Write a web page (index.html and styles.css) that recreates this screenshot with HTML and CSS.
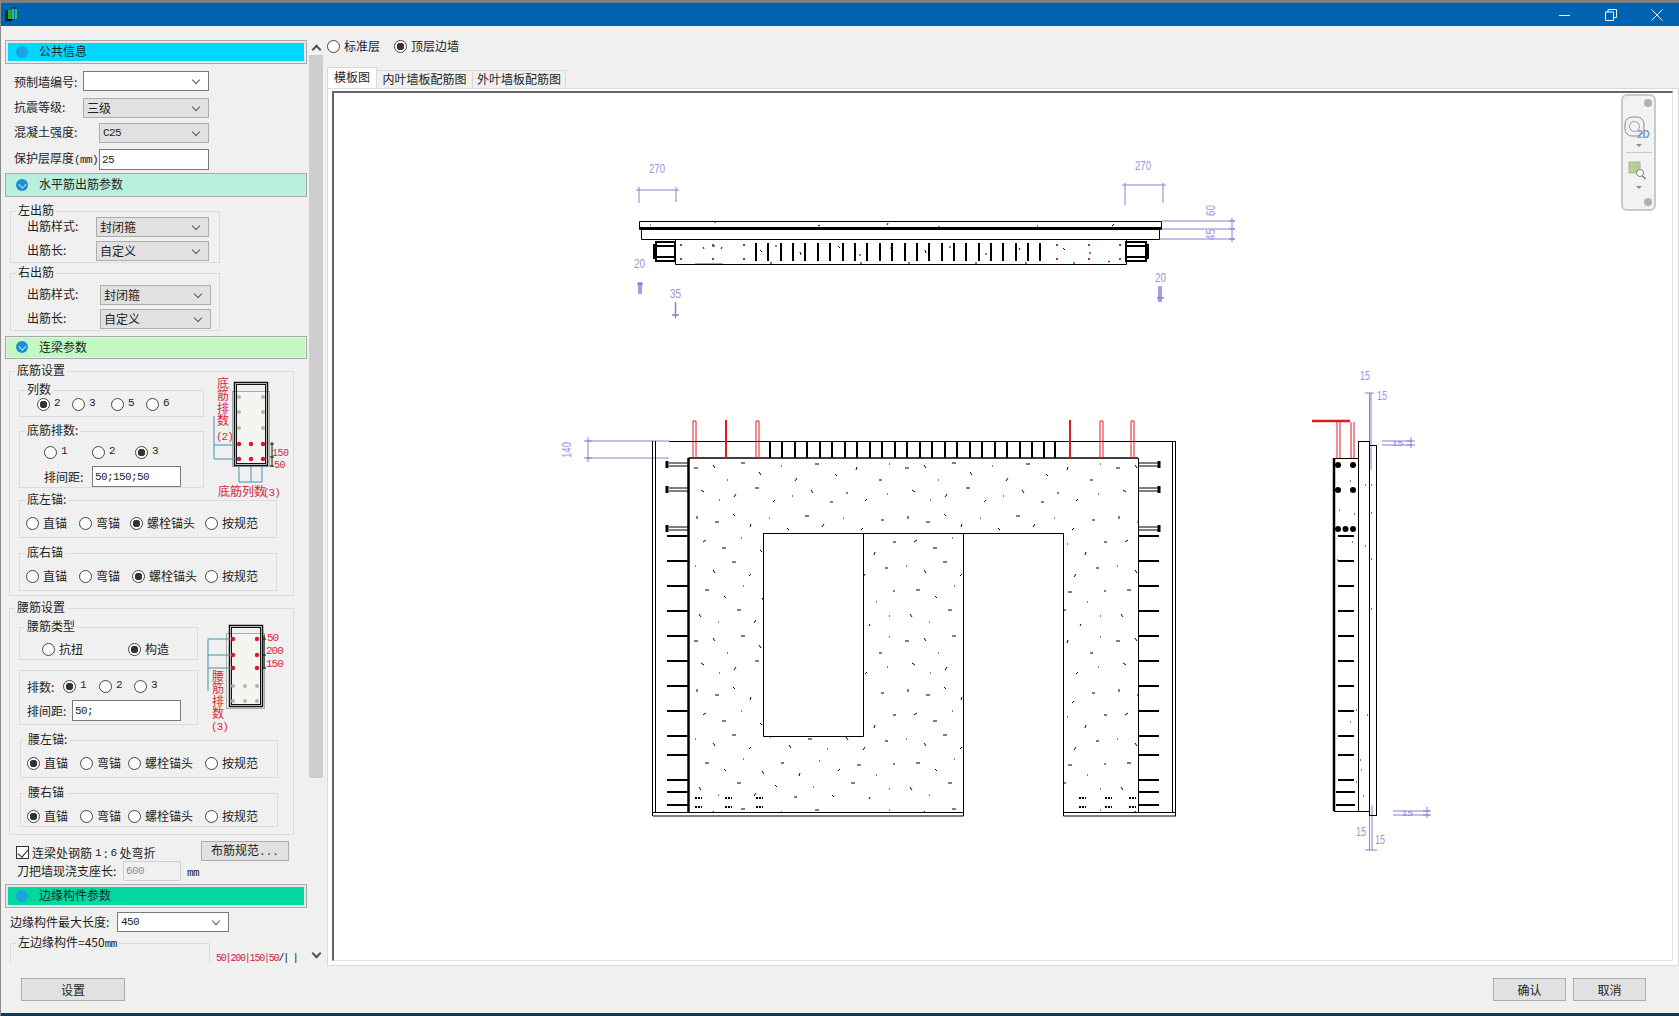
FILE: index.html
```html
<!DOCTYPE html>
<html lang="zh-CN">
<head>
<meta charset="utf-8">
<title>预制墙参数</title>
<link rel="stylesheet" href="styles.css">
</head>
<body>
<div class="window">
  <header class="titlebar">
    <svg class="appicon" width="12" height="15" viewBox="0 0 12 15"><path d="M0 4 3 2v12l-3 1z" fill="#0a2a1a"/><path d="M3 3h3.500v9H3z" fill="#1ea84a"/><path d="M7 2h2v10H7zM10 2h2v10h-2z" fill="#33c35f"/><path d="M3 12h5l-2 2H3z" fill="#04140c"/><path d="M6 1h2M9.500 1h2" stroke="#111"/></svg>
    <div class="winbtns">
      <svg width="12" height="12" viewBox="0 0 12 12"><path d="M0 6.500h11" stroke="#fff"/></svg>
      <svg width="12" height="12" viewBox="0 0 12 12"><path d="M.5 3h8v8.500h-8zM3 3V.5h8.500v8H8.500" fill="none" stroke="#fff"/></svg>
      <svg width="12" height="12" viewBox="0 0 12 12"><path d="M.5.5l11 11M11.500.5l-11 11" stroke="#fff"/></svg>
    </div>
  </header>

  <div class="content">
    <aside class="side">
      <div class="sidepanel">
        <h2 class="sec sec-a"><span class="secdot faint"></span>公共信息</h2>
        <div class="row r-top mt7"><span class="lab l69 low">预制墙编号:</span><div class="combo white w126"><span></span></div></div>
        <div class="row r-top mt7"><span class="lab l69">抗震等级:</span><div class="combo w126"><span>三级</span></div></div>
        <div class="row r-top mt5"><span class="lab l85">混凝土强度:</span><div class="combo w110"><span class="asc">C25</span></div></div>
        <div class="row r-top mt6 h21"><span class="lab l85">保护层厚度<span class="asc">(mm)</span></span><input class="txt w110 asc" value="25"></div>

        <h2 class="sec sec-b mt3"><span class="secdot"></span>水平筋出筋参数</h2>
        <fieldset class="g g-out mt8">
          <legend>左出筋</legend>
          <div class="row pl16"><span class="lab l69">出筋样式:</span><div class="combo w113"><span>封闭箍</span></div></div>
          <div class="row pl16 mt4"><span class="lab l69">出筋长:</span><div class="combo w113"><span>自定义</span></div></div>
        </fieldset>
        <fieldset class="g g-out mt4">
          <legend>右出筋</legend>
          <div class="row pl16 mt6"><span class="lab l73">出筋样式:</span><div class="combo w111"><span>封闭箍</span></div></div>
          <div class="row pl16 mt4"><span class="lab l73">出筋长:</span><div class="combo w111"><span>自定义</span></div></div>
        </fieldset>

        <h2 class="sec sec-c mt5"><span class="secdot"></span>连梁参数</h2>

        <fieldset class="g g-main mt6 pb4">
          <legend>底筋设置</legend>
          <fieldset class="g g-sub w185 mt7 pb5">
            <legend>列数</legend>
            <div class="radios c-cols pl17 mt2">
              <label class="rad"><input type="radio" name="a1" checked><span class="asc">2</span></label>
              <label class="rad"><input type="radio" name="a1"><span class="asc">3</span></label>
              <label class="rad"><input type="radio" name="a1"><span class="asc">5</span></label>
              <label class="rad"><input type="radio" name="a1"><span class="asc">6</span></label>
            </div>
          </fieldset>
          <fieldset class="g g-sub w185 mt8">
            <legend>底筋排数:</legend>
            <div class="radios c-rows pl24 mt9">
              <label class="rad"><input type="radio" name="a2"><span class="asc">1</span></label>
              <label class="rad"><input type="radio" name="a2"><span class="asc">2</span></label>
              <label class="rad"><input type="radio" name="a2" checked><span class="asc">3</span></label>
            </div>
            <div class="row pl24 mt7 h21"><span class="lab l48">排间距:</span><input class="txt w89 asc" value="50;150;50"></div>
          </fieldset>
          <fieldset class="g g-sub w258 mt6 pb7">
            <legend>底左锚:</legend>
            <div class="radios c-anc1 pl6 mt11">
              <label class="rad"><input type="radio" name="a3">直锚</label>
              <label class="rad"><input type="radio" name="a3">弯锚</label>
              <label class="rad"><input type="radio" name="a3" checked>螺栓锚头</label>
              <label class="rad"><input type="radio" name="a3">按规范</label>
            </div>
          </fieldset>
          <fieldset class="g g-sub w258 mt9 pb7">
            <legend>底右锚</legend>
            <div class="radios c-anc2 pl6 mt11">
              <label class="rad"><input type="radio" name="a4">直锚</label>
              <label class="rad"><input type="radio" name="a4">弯锚</label>
              <label class="rad"><input type="radio" name="a4" checked>螺栓锚头</label>
              <label class="rad"><input type="radio" name="a4">按规范</label>
            </div>
          </fieldset>
          <svg class="diagram d1" width="76" height="122" viewBox="215 379 76 122">
            <rect x="233.500" y="392.500" width="37" height="75" fill="#f3f5f1" stroke="#a9a9a9"/>
            <rect x="235.500" y="383.500" width="33" height="83" fill="none" stroke="#111" stroke-width="1.500"/>
            <rect x="237.500" y="385.500" width="29" height="79" fill="none" stroke="#111"/>
            <path d="M215 417v43M215 446h22M215 460h22M240 467v16M252 467v16M263 467v16M240 483h23" fill="none" stroke="#3f93ad"/>
            <g fill="#b5b5ac"><circle cx="240" cy="398" r="2"/><circle cx="264" cy="398" r="2"/><circle cx="240" cy="413" r="2"/><circle cx="264" cy="413" r="2"/><circle cx="240" cy="429" r="2"/><circle cx="264" cy="429" r="2"/></g>
            <g fill="#e0152f"><circle cx="240" cy="445" r="2.200"/><circle cx="252" cy="445" r="2.200"/><circle cx="264" cy="445" r="2.200"/><circle cx="240" cy="460" r="2.200"/><circle cx="252" cy="460" r="2.200"/><circle cx="264" cy="460" r="2.200"/></g>
            <path d="M273 443v25M271 445h4M271 458h4M271 467h4" fill="none" stroke="#111"/>
            <g class="redtxt"><text class="vert" x="224" y="378">底筋排数</text><text class="m" x="217" y="441">(2)</text><text class="m s" x="273" y="457">150</text><text class="m s" x="275" y="469">50</text><text x="219" y="497">底筋列数</text><text class="m" x="264" y="497">(3)</text></g>
          </svg>
        </fieldset>

        <fieldset class="g g-main mt6 pb7">
          <legend>腰筋设置</legend>
          <fieldset class="g g-sub w179 mt7 pb3">
            <legend>腰筋类型</legend>
            <div class="radios c-type pl22 mt10">
              <label class="rad"><input type="radio" name="b1">抗扭</label>
              <label class="rad"><input type="radio" name="b1" checked>构造</label>
            </div>
          </fieldset>
          <div class="plain w179">
            <div class="row row13 pl7">
              <span class="lab l36">排数:</span>
              <div class="radios c-pai">
                <label class="rad"><input type="radio" name="b2" checked><span class="asc">1</span></label>
                <label class="rad"><input type="radio" name="b2"><span class="asc">2</span></label>
                <label class="rad"><input type="radio" name="b2"><span class="asc">3</span></label>
              </div>
            </div>
            <div class="row pl7 mt7 h21"><span class="lab l45">排间距:</span><input class="txt w109 asc" value="50;"></div>
          </div>
          <fieldset class="g g-sub w258 mt9 ml10 pb7">
            <legend>腰左锚:</legend>
            <div class="radios c-anc3 pl6 mt11">
              <label class="rad"><input type="radio" name="b3" checked>直锚</label>
              <label class="rad"><input type="radio" name="b3">弯锚</label>
              <label class="rad"><input type="radio" name="b3">螺栓锚头</label>
              <label class="rad"><input type="radio" name="b3">按规范</label>
            </div>
          </fieldset>
          <fieldset class="g g-sub w258 mt9 ml10 pb3">
            <legend>腰右锚</legend>
            <div class="radios c-anc3 pl6 mt11">
              <label class="rad"><input type="radio" name="b4" checked>直锚</label>
              <label class="rad"><input type="radio" name="b4">弯锚</label>
              <label class="rad"><input type="radio" name="b4">螺栓锚头</label>
              <label class="rad"><input type="radio" name="b4">按规范</label>
            </div>
          </fieldset>
          <svg class="diagram d2" width="76" height="112" viewBox="208 622 76 112">
            <rect x="228.500" y="634.500" width="38" height="75" fill="#f3f5f1" stroke="#a9a9a9"/>
            <rect x="231.500" y="626.500" width="33" height="81" fill="none" stroke="#111" stroke-width="1.500"/>
            <rect x="233.500" y="628.500" width="29" height="77" fill="none" stroke="#111"/>
            <path d="M210 640v52M210 640h22M210 656h22M210 669h22" fill="none" stroke="#3f93ad"/>
            <g fill="#e0152f"><circle cx="235" cy="640" r="2.200"/><circle cx="259" cy="640" r="2.200"/><circle cx="235" cy="656" r="2.200"/><circle cx="259" cy="656" r="2.200"/><circle cx="235" cy="669" r="2.200"/><circle cx="259" cy="669" r="2.200"/></g>
            <g fill="#b5b5ac"><circle cx="235" cy="687" r="2"/><circle cx="247" cy="687" r="2"/><circle cx="259" cy="687" r="2"/><circle cx="235" cy="702" r="2"/><circle cx="247" cy="702" r="2"/><circle cx="259" cy="702" r="2"/></g>
            <path d="M266 636v34M264 640h4M264 656h4M264 669h4" fill="none" stroke="#111"/>
            <g class="redtxt"><text class="m" x="269" y="642">50</text><text class="m" x="268" y="655">200</text><text class="m" x="268" y="668">150</text><text class="vert" x="220" y="671">腰筋排数</text><text class="m" x="213" y="731">(3)</text></g>
          </svg>
        </fieldset>

        <div class="row rowchk mt6">
          <label class="chk"><input type="checkbox" checked>连梁处钢筋<span class="asc">1</span>: <span class="asc">6</span>处弯折</label>
          <button class="btn btn-rule" type="button">布筋规范<span class="dots asc">...</span></button>
        </div>
        <div class="row rowknife"><span class="lab l106">刀把墙现浇支座长:</span><input class="txt dis w58 asc" value="600" disabled><span class="asc unit">mm</span></div>

        <h2 class="sec sec-d mt3"><span class="secdot faint"></span>边缘构件参数</h2>
        <div class="row rowmax mt4"><span class="lab l107">边缘构件最大长度:</span><div class="combo white w112"><span class="asc">450</span></div></div>
        <div class="edge mt5">
          <fieldset class="g g-edge"><legend>左边缘构件=450<span class="asc">mm</span></legend></fieldset>
          <span class="edgeval">50|200|150|50<span class="edgebar">/| |</span></span>
        </div>
      </div>
      <div class="scroll">
        <span class="chev up"></span>
        <span class="thumb"></span>
        <span class="chev down"></span>
      </div>
    </aside>

    <main class="right">
      <div class="toprad">
        <label class="rad"><input type="radio" name="t" >标准层</label>
        <label class="rad"><input type="radio" name="t" checked>顶层边墙</label>
      </div>
      <nav class="tabs">
        <span class="tab on">模板图</span>
        <span class="tab t2">内叶墙板配筋图</span>
        <span class="tab">外叶墙板配筋图</span>
      </nav>
      <section class="page">
        <div class="canvas">
          <svg class="drawing" width="1339" height="867" viewBox="334 93 1339 867">
            <defs>
              <pattern id="spk1" patternUnits="userSpaceOnUse" x="689" y="458" width="211" height="173">
                <path d="M5 10h4M24 7l2 3M38 22h1M52 5h4M70 14l2 3M92 8h1M108 20l-2 3M126 6h4M146 16l2 2M168 9l-1 3M190 22h3M200 6h1M12 32l3 2M30 42h1M47 36l-2 3M66 30h4M84 44l2-2M103 38h1M122 32l2 3M141 44h3M158 34v2M178 41l-2 2M198 36h1M8 58v3M26 64h4M44 56l2 2M62 66l-1 3M80 60h1M98 70l2 2M116 58h4M135 66l-2 3M154 60h1M172 72l2-2M192 62h3M14 84l3-2M33 90h4M52 80h1M71 92l2 2M90 84l-2 3M109 92h1M128 82h4M148 90l2 3M167 86h1M186 94l-1 3M204 84h3M6 108h1M24 112l2 3M43 104h4M62 116l-2 2M81 106h1M100 114l2 3M119 108h4M138 118h1M157 106l2 3M176 116l-2 3M196 110h3M16 132h4M35 138l2 2M54 128h1M73 140l2 3M92 132h3M111 142l-1 3M130 130h1M149 140l2-2M168 134h4M187 144h1M205 132v2M10 156l2 3M29 164h1M48 152h4M67 162l-2 3M86 154l2 2M105 166h3M124 156h1M143 164l2 2M162 152h4M181 166l-1 2M200 158h1" fill="none" stroke="#000"/>
              </pattern>
            </defs>

            <g class="dim">
              <path d="M639 187v16M676 187v15M636 190h43M1125 183v22M1163 183v20M1122 185h44M1162 221h73M1162 229h73M1160 239h75M1232 218v24M1229 221h6M1229 229h6M1229 239h6"/>
              <path d="M639 282v12M641 282v12M637 284h6M675.500 302v16M672 315h7M1159 286v16M1161 286v16M1157 298h7M695 264h28" stroke-width="1.500"/>
              <path d="M586 441h83M586 458h83M588 437v25M584 441h8M584 458h8"/>
              <path d="M1369.500 393v77M1371 393v77M1365 393h9M1382 441h30M1382 445h30M1411 437v11M1407 441h8M1407 445h8"/>
              <path d="M1369.500 805v45M1372 805v45M1365 850h12M1393 811h37M1393 815h37M1427 807v11M1423 811h8M1423 815h8"/>
            </g>
            <g class="dimtxt">
              <text x="649" y="173" textLength="16" lengthAdjust="spacingAndGlyphs">270</text>
              <text x="1135" y="170" textLength="16" lengthAdjust="spacingAndGlyphs">270</text>
              <text x="634" y="268" textLength="11" lengthAdjust="spacingAndGlyphs">20</text>
              <text x="670" y="298" textLength="11" lengthAdjust="spacingAndGlyphs">35</text>
              <text x="1155" y="282" textLength="11" lengthAdjust="spacingAndGlyphs">20</text>
              <text transform="translate(1215 216) rotate(-90)" textLength="11" lengthAdjust="spacingAndGlyphs">60</text>
              <text transform="translate(1215 240) rotate(-90)" textLength="11" lengthAdjust="spacingAndGlyphs">45</text>
              <text transform="translate(571 458) rotate(-90)" textLength="16" lengthAdjust="spacingAndGlyphs">140</text>
              <text x="1360" y="380" textLength="10" lengthAdjust="spacingAndGlyphs">15</text>
              <text x="1377" y="400" textLength="10" lengthAdjust="spacingAndGlyphs">15</text>
              <text x="1356" y="836" textLength="10" lengthAdjust="spacingAndGlyphs">15</text>
              <text x="1375" y="844" textLength="10" lengthAdjust="spacingAndGlyphs">15</text>
              <text class="tiny" x="1392" y="446" textLength="11" lengthAdjust="spacingAndGlyphs">15</text>
              <text class="tiny" x="1402" y="816" textLength="11" lengthAdjust="spacingAndGlyphs">15</text>
            </g>

            <!-- plan view -->
            <g class="ln">
              <path d="M639.500 221.500h522v8h-522zM641.500 229.500v10h518v-10M675.500 239.500v25h451v-25"/>
              <path d="M639 228h523" stroke-width="2"/>
              <path d="M656 242h19v19h-19zM654 246h21M654 257h21M1126 242h20v19h-20zM1126 246h21M1126 257h21" stroke-width="2"/>
              <path d="M654.500 244v15M1147.500 244v15" stroke-width="3"/>
              <path class="stir" d="M756 243v18M768 243v18M781 243v18M793 243v18M805 243v18M818 243v18M830 243v18M843 243v18M855 243v18M867 243v18M880 243v18M892 243v18M905 243v18M917 243v18M929 243v18M942 243v18M954 243v18M966 243v18M979 243v18M991 243v18M1003 243v18M1016 243v18M1028 243v18M1040 243v18"/>
              <path class="thin" d="M703 247l1 2M712 246h3M722 247l-1 2M760 250l2 2M775 246h2M800 252l1 3M838 246l2 2M860 254v2M890 248h2M925 250l1 3M950 246v2M985 254h2M1020 248l-1 2M1063 248l2 2M1090 252v2M1108 262l2-1M650 225h1M715 222v1M818 226l2-1M887 225l1-2M939 226v1M1037 226h1M1112 226l2-2M770 263h2M860 263h2M908 263h2M975 263h2M1025 263h2M1073 263h2"/>
            </g>
            <g fill="#b32a4a">
              <rect x="680" y="244" width="2" height="2"/><rect x="712" y="244" width="2" height="2"/><rect x="743" y="244" width="2" height="2"/>
              <rect x="680" y="258" width="2" height="2"/><rect x="712" y="258" width="2" height="2"/><rect x="743" y="258" width="2" height="2"/>
              <rect x="1056" y="244" width="2" height="2"/><rect x="1088" y="244" width="2" height="2"/><rect x="1119" y="244" width="2" height="2"/>
              <rect x="1056" y="258" width="2" height="2"/><rect x="1088" y="258" width="2" height="2"/><rect x="1119" y="258" width="2" height="2"/>
            </g>

            <!-- elevation -->
            <path d="M689 458H1138V812H1063V533H964V812H689ZM763 533V736H863V533Z" fill="url(#spk1)" fill-rule="evenodd"/>
            <g class="ln">
              <path d="M669 441.500H1175.500M652.500 441V816M655.500 441V812M1172.500 441V812M1175.500 441V816M653 812.500H963.500M653 816H963.500V533.500H763.500V736.500H863.500V533.500M1063.500 533.500V816H1176M1063 812.500H1176M763.500 533.500H1063.500M1138.500 458V812"/>
              <path d="M688.500 458H1138" stroke-width="1.500"/>
              <path d="M688.500 458V812" stroke-width="2.500"/>
              <path class="stir" d="M770 441v17M782 441v17M795 441v17M807 441v17M820 441v17M832 441v17M845 441v17M857 441v17M870 441v17M882 441v17M895 441v17M907 441v17M920 441v17M932 441v17M945 441v17M957 441v17M970 441v17M982 441v17M995 441v17M1007 441v17M1020 441v17M1032 441v17M1044 441v17M1055 441v17"/>
              <path d="M669 463h19M669 466h19M669 488h19M669 491h19M669 527h19M669 530h19M1138 463h20M1138 466h20M1138 488h20M1138 491h20M1138 527h20M1138 530h20"/>
              <path class="stir" d="M667 536h21M667 561h21M667 586h21M667 611h21M667 636h21M667 661h21M667 686h21M667 711h21M667 736h21M667 755h21M667 780h21M667 792h21M667 805h21M1138 536h21M1138 561h21M1138 586h21M1138 611h21M1138 636h21M1138 661h21M1138 686h21M1138 711h21M1138 736h21M1138 755h21M1138 780h21M1138 792h21M1138 805h21"/>
              <path class="stir3" d="M667 461v7M667 486v7M667 525v7M1159 461v7M1159 486v7M1159 525v7"/>
              <path class="stir" stroke-dasharray="2 1" d="M695 798h7M695 807h7M725 798h7M725 807h7M756 798h7M756 807h7M1079 798h7M1079 807h7M1105 798h7M1105 807h7M1129 798h7M1129 807h7"/>
            </g>
            <g class="red">
              <path d="M726 420v38M1070 420v38" stroke-width="2"/>
              <path d="M693 458v-37h3v37M756 458v-37h3v37M1100 458v-37h3v37M1131 458v-37h3v37" />
            </g>

            <!-- side view -->
            <g class="ln">
              <path d="M1358.500 441V811M1369.500 441V815M1376.500 445V815M1358 441.500H1370M1369 445.500H1377M1334 458.500H1358M1334 811.500H1369M1369 815.500H1377"/>
              <path d="M1334 458V811" stroke-width="2.500"/>
              <path class="stir" d="M1338 536h16M1338 561h16M1338 586h16M1338 611h16M1338 636h16M1338 661h16M1338 686h16M1338 711h16M1338 736h16M1338 755h16M1338 780h16M1336 792h19M1336 805h19"/>
              <path class="thin" d="M1350 481h1M1339 510h1M1354 514h1M1352 542h1M1337 560h1M1365 485h1M1371 485h1M1371 513h1M1365 546h1M1371 559h1M1371 609h1M1350 722h1M1356 710h1M1367 715h1M1360 760h1M1361 770h1M1356 782h1M1363 796h1"/>
            </g>
            <g fill="#000">
              <circle cx="1338" cy="465" r="3"/><circle cx="1353" cy="465" r="3"/><circle cx="1338" cy="490" r="3"/><circle cx="1353" cy="490" r="3"/><circle cx="1338" cy="529" r="3"/><circle cx="1345.500" cy="529" r="3"/><circle cx="1353" cy="529" r="3"/>
            </g>
            <g class="red">
              <path d="M1312 421h38" stroke-width="2.500"/>
              <path d="M1337 458v-36M1340 458v-36M1351 458v-36M1354 458v-36"/>
            </g>
          </svg>
          <div class="navtool">
            <span class="navx"></span>
            <svg class="nav2d" width="33" height="27" viewBox="0 0 33 27">
              <rect x="3" y="3" width="19" height="19" rx="7" fill="none" stroke="#8c8c8c"/>
              <circle cx="12.500" cy="12.500" r="5" fill="none" stroke="#9a9a9a"/>
              <text x="15" y="24">2D</text>
            </svg>
            <span class="tri"></span>
            <span class="navsep"></span>
            <svg class="navzoom" width="24" height="22" viewBox="0 0 24 22">
              <rect x="2" y="1" width="11" height="11" fill="#b6cf8f" stroke="#a9b7a0"/>
              <circle cx="13" cy="12" r="3.500" fill="#fff" stroke="#7e7e7e"/>
              <path d="M15.500 15l3 3" stroke="#7e7e7e" stroke-width="1.500"/>
            </svg>
            <span class="tri"></span>
            <span class="navm"></span>
          </div>
        </div>
      </section>
    </main>
  </div>

  <footer class="footer">
    <button class="btn btn-set" type="button">设置</button>
    <div class="okbtns">
      <button class="btn btn-ok" type="button">确认</button>
      <button class="btn btn-ok" type="button">取消</button>
    </div>
  </footer>
  <div class="taskstrip"></div>
</div>
</body>
</html>
```
FILE: styles.css
```css
* { box-sizing: border-box; }
html, body { margin: 0; padding: 0; }
body {
  font-family: "Noto Sans CJK SC", "Liberation Sans", sans-serif;
  font-size: 12px;
  line-height: 14px;
  color: #1e1e1e;
  background: #f0f0f0;
}
.window {
  width: 1679px;
  height: 1016px;
  display: flex;
  flex-direction: column;
  overflow: hidden;
  border-left: 1px solid #8a8a8a;
}
.titlebar {
  flex: none;
  height: 26px;
  border-top: 3px solid #7f7f7f;
  background: #0063b1;
  display: flex;
  align-items: center;
  justify-content: space-between;
  padding: 0 16px 0 4px;
}
.appicon { display: block; }
.winbtns { display: flex; gap: 34px; align-items: center; }

.content { flex: none; height: 939px; display: flex; }
.side { flex: none; width: 326px; display: flex; padding-left: 4px; }
.sidepanel { width: 304px; height: 937px; overflow: hidden; padding-top: 14px; }
.scroll {
  position: relative;
  width: 14px;
  margin-left: 0;
  height: 937px;
  display: flex;
  flex-direction: column;
  align-items: center;
  padding-top: 29px;
}
.thumb { display: block; width: 14px; height: 723px; background: #cdcdcd; }
.chev { position: absolute; left: 4px; width: 7px; height: 7px; border: solid #505050; border-width: 2px 0 0 2px; }
.chev.up { top: 20px; transform: rotate(45deg); }
.chev.down { top: 924px; transform: rotate(225deg); }

.sec {
  margin: 0;
  height: 24px;
  width: 302px;
  border: 1px solid #a9a9a9;
  display: flex;
  align-items: center;
  font-size: 12px;
  font-weight: 400;
  padding: 0 0 2px 10px;
}
.sec-a { background: #00d8ff; box-shadow: inset 0 0 0 2px #e6e6e6; }
.sec-b { background: #b9efdd; }
.sec-c { background: #c2f9c2; height: 23px; box-shadow: inset 0 0 0 1px #ececec; }
.sec-d { background: #00d8a0; box-shadow: inset 0 0 0 2px #e6e6e6; }
.secdot {
  position: relative;
  width: 12px;
  height: 12px;
  border-radius: 50%;
  background: #1a8fd4;
  margin: 1px 11px 0 0;
}
.secdot::after {
  content: "";
  position: absolute;
  left: 3px;
  top: 2px;
  width: 6px;
  height: 6px;
  border: solid #fff;
  border-width: 0 1.500px 1.500px 0;
  transform: scale(.8) rotate(45deg);
}
.secdot.faint { background: #1ca2e2; }
.secdot.faint::after { border-color: #3a9fd8; }

.row { display: flex; align-items: center; height: 20px; }
.row13 { height: 13px; margin-top: 9px; }
.h21 { height: 21px; }
.r-top { padding-left: 9px; }
.lab { flex: none; white-space: nowrap; }
.r-top .lab, .pl16 .lab { margin-top: -2px; }
.r-top .lab.low { margin-top: 1px; }
.l36 { width: 36px; }
.l45 { width: 45px; }
.l48 { width: 48px; }
.l69 { width: 69px; }
.l73 { width: 73px; }
.l85 { width: 85px; }
.l106 { width: 106px; }
.l107 { width: 107px; }

.combo {
  position: relative;
  flex: none;
  height: 20px;
  background: #e1e1e1;
  border: 1px solid #adadad;
  padding-left: 3px;
  display: flex;
  align-items: center;
}
.combo.white { background: #fff; border-color: #7a7a7a; }
.combo::after {
  content: "";
  position: absolute;
  right: 9px;
  top: 5px;
  width: 5px;
  height: 5px;
  border: solid #555;
  border-width: 0 1px 1px 0;
  transform: rotate(45deg);
}
.txt {
  flex: none;
  height: 100%;
  border: 1px solid #7a7a7a;
  background: #fff;
  padding: 0 0 0 2px;
  outline: none;
  color: #1e1e1e;
  border-radius: 0;
}
.txt.dis { background: #f0f0f0; border-color: #cfcfcf; color: #8c8c8c; height: 20px; }
.asc {
  font-family: "Liberation Mono", monospace;
  font-size: 11px;
  letter-spacing: -0.6px;
}
.dots { letter-spacing: 0; }

.w58 { width: 58px; }
.w89 { width: 89px; }
.w109 { width: 109px; }
.w110 { width: 110px; }
.w111 { width: 111px; }
.w112 { width: 112px; }
.w113 { width: 113px; }
.w126 { width: 126px; }
.w179 { width: 179px; }
.w185 { width: 185px; }
.w258 { width: 258px; }

.mt2 { margin-top: 2px; }
.mt3 { margin-top: 3px; }
.mt4 { margin-top: 4px; }
.mt5 { margin-top: 5px; }
.mt6 { margin-top: 6px; }
.mt7 { margin-top: 7px; }
.mt8 { margin-top: 8px; }
.mt9 { margin-top: 9px; }
.mt10 { margin-top: 10px; }
.mt11 { margin-top: 11px; }
.pl6 { padding-left: 6px; }
.pl7 { padding-left: 7px; }
.pl16 { padding-left: 16px; }
.pl17 { padding-left: 17px; }
.pl22 { padding-left: 22px; }
.pl24 { padding-left: 24px; }
.pb3 { padding-bottom: 3px !important; }
.pb4 { padding-bottom: 4px !important; }
.pb5 { padding-bottom: 5px !important; }
.pb7 { padding-bottom: 7px !important; }

.g {
  margin-left: 0;
  margin-right: 0;
  padding: 0;
  border: 1px solid #dcdcdc;
  min-width: 0;
}
.g legend {
  margin-left: 5px;
  padding: 0 2px;
  line-height: 10px;
  height: 12px;
  white-space: nowrap;
}
.g-out { width: 210px; margin-left: 5px; padding-bottom: 1px; }
.g-main { position: relative; width: 285px; margin-left: 4px; }
.g-sub { margin-left: 9px; }
.ml10 { margin-left: 10px; }
.plain { width: 179px; margin: 10px 0 0 9px; border: 1px solid #dcdcdc; padding-bottom: 3px; }
.g-edge { width: 200px; height: 40px; margin-left: 5px; flex: none; }

.radios { display: grid; }
.c-cols { grid-template-columns: 35px 39px 35px 35px; }
.c-rows { grid-template-columns: 48px 43px 40px; }
.c-anc1 { grid-template-columns: 53px 51px 75px 60px; }
.c-anc2 { grid-template-columns: 53px 53px 73px 60px; }
.c-anc3 { grid-template-columns: 53px 48px 77px 60px; }
.c-type { grid-template-columns: 86px 50px; }
.c-pai { grid-template-columns: 36px 35px 30px; }

.rad { display: flex; align-items: flex-start; height: 13px; line-height: 11px; gap: 4px; white-space: nowrap; }
.rad input {
  appearance: none;
  flex: none;
  margin: 0;
  width: 13px;
  height: 13px;
  border-radius: 50%;
  border: 1px solid #444;
  background: #fff;
}
.rad input:checked { background: radial-gradient(circle, #333 0 3.500px, #fff 4px); }

.rowchk { justify-content: space-between; padding-left: 11px; width: 284px; }
.chk { display: flex; align-items: center; gap: 3px; padding-top: 3px; white-space: nowrap; }
.chk input {
  appearance: none;
  margin: 0;
  width: 13px;
  height: 13px;
  border: 1px solid #333;
  background: #fff;
  position: relative;
}
.chk input:checked::after {
  content: "";
  position: absolute;
  left: 3px;
  top: 0;
  width: 5px;
  height: 9px;
  border: solid #222;
  border-width: 0 1px 1px 0;
  transform: rotate(40deg);
}
.btn {
  font: inherit;
  color: #1e1e1e;
  background: #e1e1e1;
  border: 1px solid #adadad;
  padding: 0;
}
.btn-rule { width: 88px; height: 20px; margin-bottom: 0; }
.rowknife { padding-left: 12px; }
.unit { margin-left: 6px; padding-top: 3px; }
.rowmax { padding-left: 5px; }
.edge { display: flex; align-items: flex-start; height: 60px; }
.edgeval {
  font-family: "Liberation Mono", monospace;
  font-size: 10px;
  letter-spacing: -1.200px;
  color: #c9243c;
  margin: 15px 0 0 6px;
  white-space: nowrap;
}
.edgebar { color: #111; }

.diagram { position: absolute; overflow: visible; }
.d1 { left: 204px; top: 1px; }
.d2 { left: 196px; top: 7px; }
.redtxt text { font-size: 12px; fill: #d8273a; }
.redtxt text.m { font-family: "Liberation Mono", monospace; font-size: 11px; letter-spacing: -1px; }
.redtxt text.m.s { font-size: 10px; letter-spacing: -.5px; }
.redtxt text.vert { writing-mode: vertical-rl; text-orientation: upright; letter-spacing: .6px; }

.right { flex: 1; min-width: 0; padding-top: 14px; }
.toprad { display: flex; gap: 14px; height: 14px; }
.toprad .rad { height: 14px; line-height: 12px; }
.tabs { display: flex; height: 21px; margin-top: 13px; align-items: flex-end; }
.tab {
  height: 18px;
  width: 93px;
  text-align: center;
  line-height: 15px;
  border: 1px solid #d9d9d9;
  border-bottom: 0;
  border-left: 0;
  background: #f0f0f0;
}
.tab.t2 { width: 96px; }
.tab.on { height: 21px; width: 50px; background: #fff; border-left: 1px solid #d9d9d9; line-height: 18px; }
.page {
  width: 1352px;
  height: 878px;
  background: #fff;
  border: 1px solid #d9d9d9;
  padding: 2px 5px 4px 4px;
}
.canvas {
  position: relative;
  width: 1341px;
  height: 870px;
  border: 1px solid #e2e2e2;
  border-top: 2px solid #666;
  border-left: 2px solid #666;
  background: #fff;
  overflow: hidden;
}
.drawing { display: block; }
.dim { fill: none; stroke: #8a80d6; }
.dimtxt text { font-family: "Liberation Sans", sans-serif; font-size: 13px; fill: #9a90dc; }
.dimtxt text.tiny { font-size: 8px; fill: #8a80d6; }
.ln { fill: none; stroke: #000; stroke-width: 1; }
.ln .stir { stroke-width: 2; }
.ln .stir3 { stroke-width: 3; }
.ln .thin { stroke-width: 1; }
.red { fill: none; stroke: #de1a24; stroke-width: 1; }

.navtool {
  position: absolute;
  left: 1287px;
  top: 1px;
  width: 35px;
  height: 117px;
  background: #f2f2f2;
  border: 2px solid #c9c9c9;
  border-radius: 6px;
  display: flex;
  flex-direction: column;
  align-items: center;
}
.navx, .navm {
  position: absolute;
  right: 2px;
  width: 8px;
  height: 8px;
  border-radius: 50%;
  background: #b0b0b0;
}
.navx { top: 3px; }
.navm { bottom: 3px; }
.nav2d { display: block; margin-top: 18px; }
.nav2d text { font-family: "Liberation Sans", sans-serif; font-size: 10px; font-weight: 700; fill: #6f9fc8; }
.tri { width: 0; height: 0; margin-top: 3px; border: 3px solid transparent; border-top: 3px solid #8e8e8e; border-bottom: 0; }
.navsep { width: 26px; height: 1px; background: #c9c9c9; margin-top: 5px; }
.navzoom { display: block; margin-top: 8px; }

.footer {
  flex: none;
  height: 48px;
  display: flex;
  justify-content: space-between;
  align-items: flex-start;
  padding: 13px 33px 0 20px;
}
.btn-set { width: 104px; height: 23px; }
.okbtns { display: flex; gap: 7px; }
.btn-ok { width: 73px; height: 23px; }
.taskstrip { flex: 1; background: #0a3a5c; }
```
